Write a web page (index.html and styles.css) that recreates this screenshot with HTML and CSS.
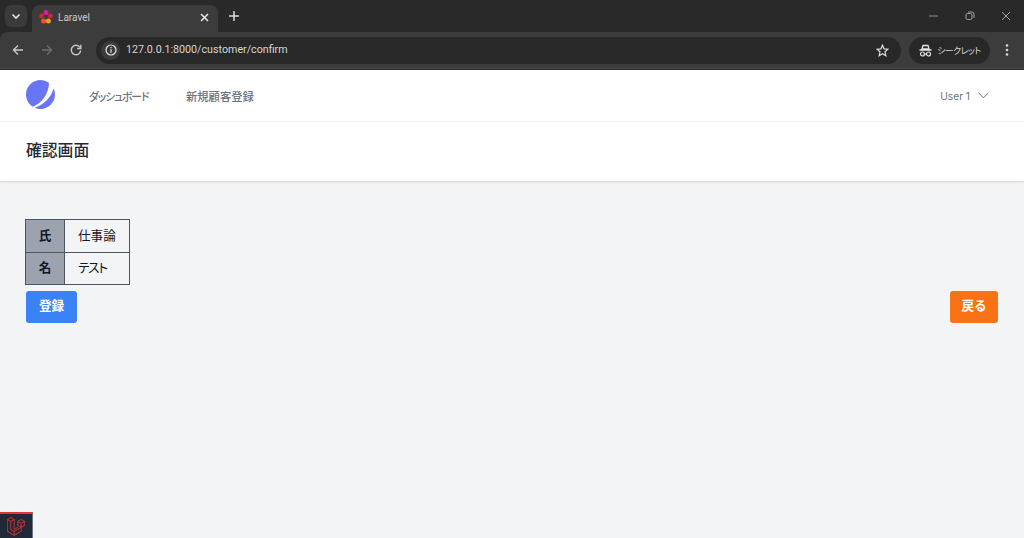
FILE: index.html
```html
<!DOCTYPE html>
<html lang="ja">
<head>
<meta charset="utf-8">
<title>Laravel</title>
<link rel="stylesheet" href="styles.css">
</head>
<body>
<div class="browser">
  <div class="tabstrip">
    <div class="tab-search"><svg width="10" height="10" viewBox="0 0 10 10"><path d="M1.500 3.500 5 7l3.500-3.500" fill="none" stroke="#e3e3e3" stroke-width="1.600"/></svg></div>
    <div class="tab">
      <svg class="favicon" width="14" height="14" viewBox="0 0 14 14"><circle cx="7" cy="2.600" r="2.500" fill="#d81ca8"/><circle cx="2.600" cy="6" r="2.400" fill="#d8213a"/><circle cx="11.400" cy="6" r="2.400" fill="#d8213a"/><circle cx="4.600" cy="11" r="2.500" fill="#ec5a22"/><circle cx="9.400" cy="11" r="2.500" fill="#f09a1c"/></svg>
      <span class="tab-title">Laravel</span>
      <svg class="tab-close" width="9" height="9" viewBox="0 0 9 9"><path d="M1 1l7 7M8 1 1 8" stroke="#e6e6e6" stroke-width="1.500"/></svg>
    </div>
    <svg class="newtab" width="10" height="10" viewBox="0 0 10 10"><path d="M5 0v10M0 5h10" stroke="#dcdcdc" stroke-width="1.500"/></svg>
    <div class="winctl">
      <svg width="10" height="10" viewBox="0 0 10 10"><path d="M0 5h9" stroke="#8f8f8f"/></svg>
      <svg width="10" height="10" viewBox="0 0 10 10"><rect x="1" y="2.500" width="6" height="6" rx="1.500" fill="none" stroke="#a0a0a0"/><path d="M3 1h4a2 2 0 0 1 2 2v4" fill="none" stroke="#a0a0a0"/></svg>
      <svg width="10" height="10" viewBox="0 0 10 10"><path d="M1 1l8 8M9 1 1 9" stroke="#a0a0a0"/></svg>
    </div>
  </div>
  <div class="toolbar">
    <svg class="tb-icon" width="12" height="12" viewBox="0 0 12 12"><path d="M11 6H1.500M6 1.500 1.500 6 6 10.500" fill="none" stroke="#c8c8c8" stroke-width="1.400"/></svg>
    <svg class="tb-icon" width="12" height="12" viewBox="0 0 12 12"><path d="M1 6h9.500M6 1.500 10.500 6 6 10.500" fill="none" stroke="#6e6e6e" stroke-width="1.400"/></svg>
    <svg class="tb-icon" width="12" height="12" viewBox="0 0 12 12"><path d="M10 3.500A4.700 4.700 0 1 0 10.700 6.500" fill="none" stroke="#c8c8c8" stroke-width="1.400"/><path d="M10.800 .8v3.700H7.100" fill="none" stroke="#c8c8c8" stroke-width="1.400"/></svg>
    <div class="omnibox">
      <div class="site-info"><svg width="12" height="12" viewBox="0 0 12 12"><circle cx="6" cy="6" r="5" fill="none" stroke="#e3e3e3" stroke-width="1.200"/><path d="M6 5.200v3.500M6 3v1.300" stroke="#e3e3e3" stroke-width="1.200"/></svg></div>
      <span class="url">127.0.0.1:8000/customer/confirm</span>
      <svg class="star" width="13" height="13" viewBox="0 0 14 14"><path d="M7 1.300 8.700 5.200l4.200.4-3.200 2.800.9 4.200L7 10.400l-3.600 2.200.9-4.200L1.100 5.600l4.200-.4z" fill="none" stroke="#dcdcdc" stroke-width="1.300"/></svg>
    </div>
    <div class="incognito">
      <svg width="13" height="13" viewBox="0 0 13 13"><path d="M3 5 4 1.500h5L10 5zM.5 6h12" fill="none" stroke="#e3e3e3" stroke-width="1.300"/><circle cx="3.500" cy="10" r="2" fill="none" stroke="#e3e3e3" stroke-width="1.200"/><circle cx="9.500" cy="10" r="2" fill="none" stroke="#e3e3e3" stroke-width="1.200"/><path d="M5.500 10h2" stroke="#e3e3e3" stroke-width="1.200"/></svg>
      <span class="incognito-label">シークレット</span>
    </div>
    <svg class="kebab" width="4" height="14" viewBox="0 0 4 14"><circle cx="2" cy="2.500" r="1.300" fill="#d8d8d8"/><circle cx="2" cy="7" r="1.300" fill="#d8d8d8"/><circle cx="2" cy="11.500" r="1.300" fill="#d8d8d8"/></svg>
  </div>
</div>
<div class="page">
  <nav class="nav">
    <div class="nav-left">
      <svg class="logo" width="29" height="29" viewBox="0 0 48 48"><path d="M11.395 44.428C4.557 40.198 0 32.632 0 24 0 10.745 10.745 0 24 0a23.891 23.891 0 0113.997 4.502c-.2 17.907-11.097 33.245-26.602 39.926z" fill="#6875F5"/><path d="M14.134 45.885A23.914 23.914 0 0024 48c13.255 0 24-10.745 24-24 0-3.516-.756-6.856-2.115-9.866-4.659 15.143-16.608 27.092-31.750 31.751z" fill="#6875F5"/></svg>
      <a class="nav-link">ダッシュボード</a>
      <a class="nav-link-2">新規顧客登録</a>
    </div>
    <div class="nav-user"><span>User 1</span><svg width="11" height="7" viewBox="0 0 11 7"><path d="M.5.800l5 5 5-5" fill="none" stroke="#6b7280" stroke-width="1"/></svg></div>
  </nav>
  <header class="header"><h2 class="title">確認画面</h2></header>
  <main class="main">
    <table class="tbl">
      <tr><th>氏</th><td>仕事論</td></tr>
      <tr><th>名</th><td class="kana">テスト</td></tr>
    </table>
    <div class="actions">
      <button class="btn btn-blue">登録</button>
      <button class="btn btn-orange">戻る</button>
    </div>
  </main>
  <div class="debugbar"><svg width="18" height="19" viewBox="0 0 50 52"><path d="M1 6.500 10.500 1 20 6.500 10.500 12zM1 6.500v32.800l19 11.200 19.500-11.200V28M10.500 12v22L20 39.500 39.500 28 49 22.500V11.800L39.500 6.300 30 11.800v10.700L39.500 28M39.500 17.300V28M30 11.800l9.500 5.500 9.500-5.500M20 6.500v27L30 28M20 39.500v11" fill="none" stroke="#b5302e" stroke-width="3"/></svg></div>
</div>
</body>
</html>
```

FILE: styles.css
```css
* { box-sizing: border-box; }
html, body { margin: 0; height: 100%; overflow: hidden; }
body { font-family: "Noto Sans CJK JP", "Noto Sans", sans-serif; background: #f3f4f6; display: flex; flex-direction: column; font-feature-settings: "palt"; }
.browser { height: 70px; flex: none; background: #292929; }
.tabstrip { height: 32px; padding-left: 5px; display: flex; align-items: flex-start; background: #292929; }
.tab-search { width: 22px; height: 22px; margin-top: 5px; border-radius: 6px; background: #3a3a3a; display: flex; align-items: center; justify-content: center; }
.tab { width: 186px; height: 27px; margin-top: 5px; margin-left: 5px; padding: 0 9px 3px 7px; border-radius: 8px 8px 0 0; background: #3c3c3c; display: flex; align-items: center; }
.favicon { flex: none; }
.tab-title { margin-left: 5px; flex: 1; font: 10px Roboto, "Noto Sans", sans-serif; color: #c9c9c9; }
.newtab { margin: 11px 0 0 11px; }
.winctl { margin-left: auto; padding: 11px 13px 0 0; display: flex; gap: 26px; }
.toolbar { height: 37px; padding: 0 0 0 12px; background: #3c3c3c; border-radius: 8px 0 0 0; display: flex; align-items: center; border-bottom: 1px solid #4a4a4a; }
.tb-icon { margin-right: 17px; flex: none; }
.tb-icon:nth-child(3) { margin-right: 14px; }
.omnibox { width: 805px; height: 27px; border-radius: 14px; background: #282828; display: flex; align-items: center; padding-left: 5px; }
.site-info { width: 19px; height: 19px; border-radius: 50%; background: #3c3c3c; display: flex; align-items: center; justify-content: center; }
.url { margin-left: 6px; padding-bottom: 1px; font: 10.700px Roboto, "Noto Sans", sans-serif; color: #d6d6d6; }
.star { margin-left: auto; margin-right: 12px; }
.incognito { width: 81px; height: 27px; margin-left: 8px; border-radius: 14px; background: #282828; display: flex; align-items: center; padding-left: 10px; gap: 5px; }
.incognito-label { font-size: 9px; letter-spacing: -.6px; color: #d6d6d6; white-space: nowrap; }
.kebab { margin-left: 15px; }
.page { flex: 1; position: relative; display: flex; flex-direction: column; }
.nav { height: 52px; flex: none; background: #fff; border-bottom: 1px solid #f3f4f6; padding: 0 35px 2px 26px; display: flex; align-items: center; justify-content: space-between; }
.nav-left { display: flex; align-items: center; }
.logo { flex: none; }
.nav-link { margin-left: 34px; width: 59px; font-size: 10.800px; letter-spacing: -1.100px; white-space: nowrap; color: #6b7280; font-weight: 500; padding-top: 2px; }
.nav-link-2 { margin-left: 38px; font-size: 11.300px; color: #6b7280; font-weight: 500; padding-top: 2px; }
.nav-user { display: flex; align-items: center; gap: 8px; padding-top: 2px; font: 10.200px Inter, "Noto Sans", sans-serif; color: #6b7280; }
.header { height: 59px; flex: none; background: #fff; box-shadow: 0 1px 2px rgba(0,0,0,.14); padding: 0 26px 5px; display: flex; align-items: center; }
.title { margin: 0; font-size: 15.800px; font-weight: 500; color: #1f2937; }
.main { flex: 1; padding: 38px 26px 0; }
.tbl { border-collapse: collapse; font-size: 12.600px; color: #111827; margin-left: -1px; }
.tbl th, .tbl td { border: 1px solid #4b5563; height: 32.500px; padding: 0 0 3px; font-weight: 400; }
.tbl th { width: 39px; background: #9ca3af; font-weight: 700; text-align: center; }
.tbl td { width: 65px; padding-left: 13px; text-align: left; }
.tbl .kana { letter-spacing: -1.200px; }
.actions { display: flex; justify-content: space-between; margin: 6px 0 0; }
.btn { height: 32px; border: 0; border-radius: 3px; color: #fff; font: 700 12.600px "Noto Sans CJK JP", sans-serif; padding: 0 0 5px; }
.btn-blue { width: 51px; background: #3b82f6; }
.btn-orange { width: 48px; background: #f97316; }
.debugbar { position: absolute; left: 0; bottom: 0; width: 33px; height: 26px; background: #1f2937; border-top: 2px solid #e3342f; border-right: 1px solid #6b7280; display: flex; align-items: center; justify-content: center; }
```
